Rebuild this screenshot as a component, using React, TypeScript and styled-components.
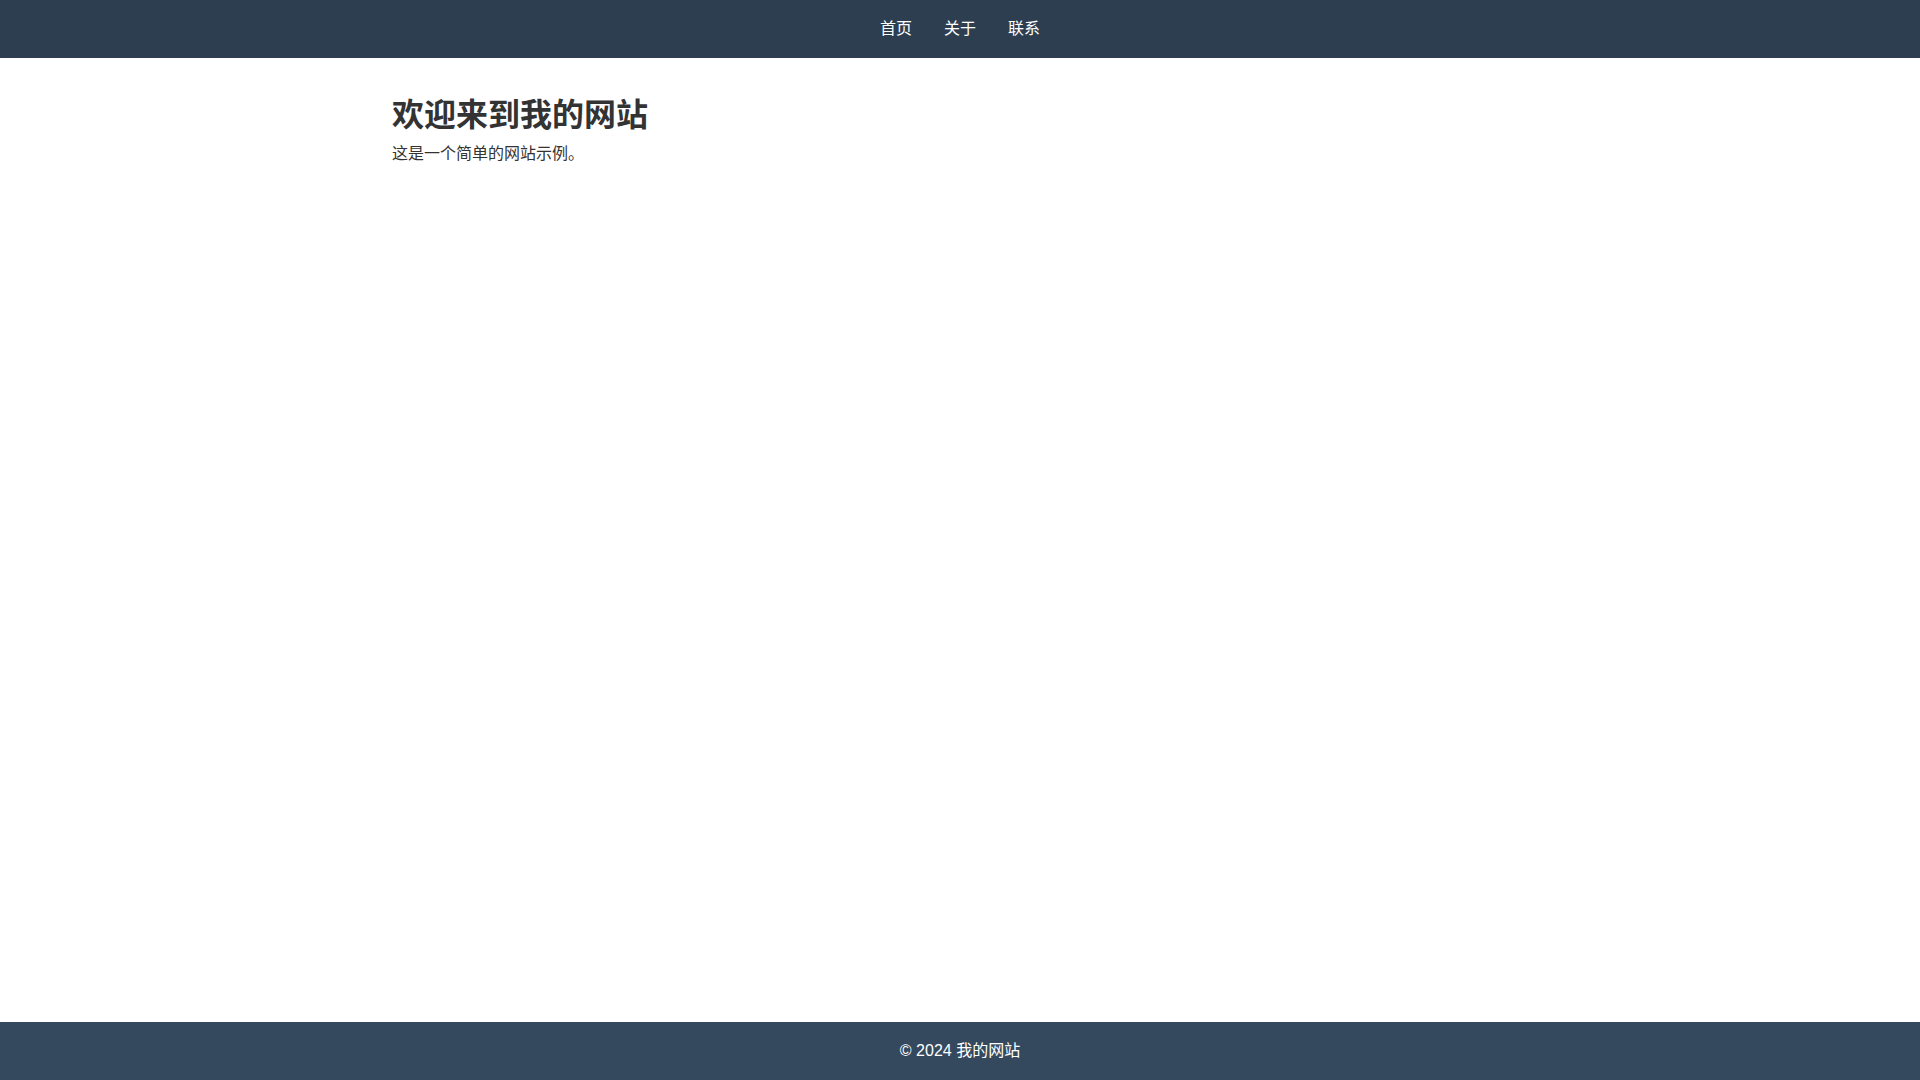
import React from "react";
import styled, { createGlobalStyle } from "styled-components";

const GlobalStyle = createGlobalStyle`
  * {
    box-sizing: border-box;
  }
  body {
    margin: 0;
    font-family: "Liberation Sans", "Noto Sans CJK SC", sans-serif;
    line-height: 1.6;
    color: #333;
    background: #fff;
  }
`;

const Page = styled.div`
  min-height: 100vh;
  display: flex;
  flex-direction: column;
`;

const Header = styled.header`
  background-color: #2c3e50;
  padding: 1rem 0;
`;

const Nav = styled.nav`
  display: flex;
  justify-content: center;
  gap: 2rem;

  & a {
    color: #fff;
    text-decoration: none;
    font-size: 1rem;
  }
`;

const Main = styled.main`
  flex: 1;
  width: 100%;
  max-width: 1200px;
  margin: 0 auto;
  padding: 2rem;
`;

const Title = styled.h1`
  margin: 0;
  font-size: 2rem;
  color: #333;
`;

const Text = styled.p`
  margin: 0;
  font-size: 1rem;
`;

const Footer = styled.footer`
  background-color: #34495e;
  color: #fff;
  text-align: center;
  padding: 1rem 0;
`;

const links = [
  { id: 1, text: "首页", href: "#" },
  { id: 2, text: "关于", href: "#" },
  { id: 3, text: "联系", href: "#" }
];

const App = () => {
  return (
    <>
      <GlobalStyle />
      <Page>
        <Header>
          <Nav>
            {links.map((link) => (
              <a key={link.id} href={link.href}>
                {link.text}
              </a>
            ))}
          </Nav>
        </Header>
        <Main>
          <Title>欢迎来到我的网站</Title>
          <Text>这是一个简单的网站示例。</Text>
        </Main>
        <Footer>© 2024 我的网站</Footer>
      </Page>
    </>
  );
};

export default App;
